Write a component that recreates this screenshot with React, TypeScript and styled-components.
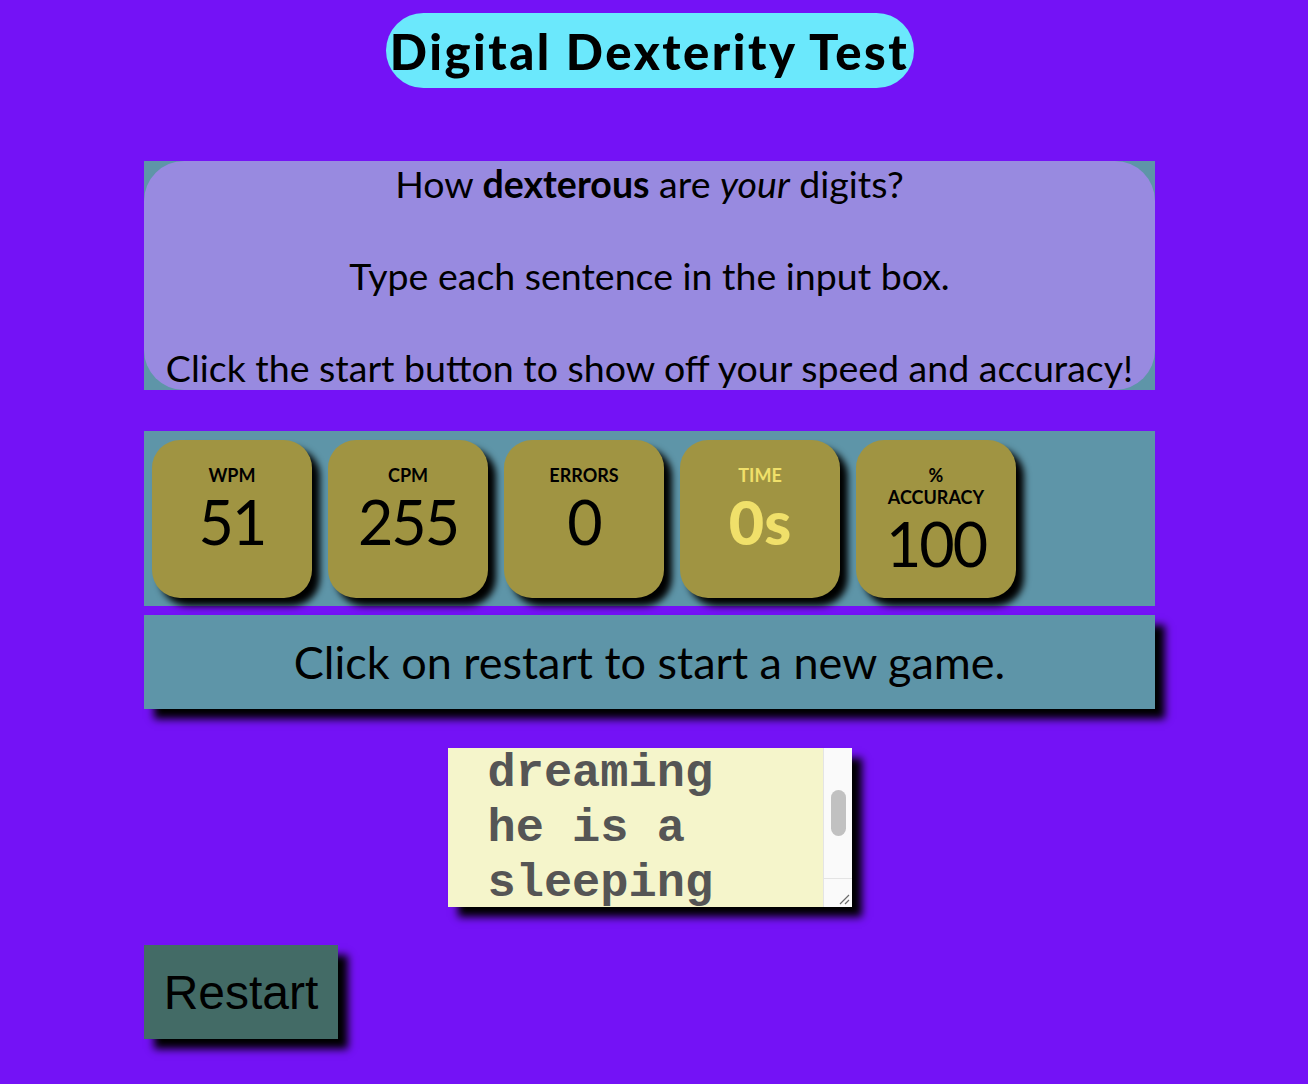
import React from 'react';
import styled, { createGlobalStyle } from 'styled-components';

const GlobalStyle = createGlobalStyle`
  html, body {
    margin: 0;
    padding: 0;
    background: #7412f6;
  }
  body {
    font-family: Lato, "Open Sans", sans-serif;
    color: #000;
  }
`;

const Page = styled.div`
  width: 1299px;
  display: flex;
  flex-direction: column;
  align-items: center;
  padding-top: 13px;
  padding-bottom: 45px;
`;

const TitlePill = styled.h1`
  margin: 0;
  height: 75px;
  width: 528px;
  border-radius: 38px;
  background: #6be8fc;
  display: flex;
  align-items: center;
  justify-content: center;
  font-size: 49px;
  font-weight: 900;
  letter-spacing: 2.5px;
  white-space: nowrap;
`;

const Panel = styled.div`
  width: 1011px;
  background: #5e95a8;
  box-sizing: border-box;
`;

const IntroPanel = styled(Panel)`
  margin-top: 73px;
`;

const IntroInner = styled.div`
  background: #988ae0;
  border-radius: 40px;
  text-align: center;
  font-size: 37.5px;
  line-height: 46px;
  height: 229px;
  white-space: nowrap;
`;

const StatsPanel = styled(Panel)`
  margin-top: 41px;
  height: 175px;
  padding: 9px 8px;
  display: flex;
  gap: 16px;
`;

const StatCard = styled.div`
  width: 160px;
  height: 158px;
  border-radius: 28px;
  background: #a09442;
  box-shadow: 8px 8px 7px #000;
  display: flex;
  flex-direction: column;
  align-items: center;
  padding-top: 24px;
  box-sizing: border-box;
`;

const StatLabel = styled.div<{ $accent?: boolean }>`
  font-size: 18px;
  font-weight: 700;
  line-height: 22px;
  text-align: center;
  color: ${(p) => (p.$accent ? '#f0e06a' : '#000')};
`;

const StatValue = styled.div<{ $accent?: boolean }>`
  margin-top: 6px;
  font-size: 61px;
  line-height: 60px;
  letter-spacing: ${(p) => (p.$accent ? '0' : '-2px')};
  font-weight: ${(p) => (p.$accent ? 900 : 400)};
  color: ${(p) => (p.$accent ? '#f0e06a' : '#000')};
`;

const MessagePanel = styled(Panel)`
  margin-top: 9px;
  height: 94px;
  display: flex;
  align-items: center;
  justify-content: center;
  font-size: 45px;
  box-shadow: 10px 10px 8px #000;
`;

const TypeBoxWrap = styled.div`
  position: relative;
  margin-top: 39px;
  width: 404px;
  height: 159px;
  box-shadow: 10px 10px 8px #000;
`;

const TypeBox = styled.textarea`
  display: block;
  width: 100%;
  height: 100%;
  box-sizing: border-box;
  border: none;
  outline: none;
  resize: both;
  background: #f5f5cb;
  color: #555;
  font-family: "Liberation Mono", "Courier New", monospace;
  font-weight: 700;
  font-size: 47px;
  line-height: 55px;
  padding: 0 0 0 40px;
  overflow-y: scroll;
  white-space: pre;
`;

const ScrollTrack = styled.div`
  position: absolute;
  top: 0;
  right: 0;
  bottom: 0;
  width: 28px;
  background: #fafafa;
  border-left: 1px solid #e4e4e4;
  pointer-events: none;
`;

const ScrollThumb = styled.div`
  position: absolute;
  top: 42px;
  left: 7px;
  width: 15px;
  height: 46px;
  border-radius: 8px;
  background: #c1c1c1;
`;

const ScrollCorner = styled.div`
  position: absolute;
  left: 0;
  right: 0;
  bottom: 0;
  height: 28px;
  border-top: 1px solid #e4e4e4;
`;

const Grip = styled.svg`
  position: absolute;
  right: 2px;
  bottom: 2px;
`;

const ButtonRow = styled.div`
  width: 1011px;
  margin-top: 38px;
`;

const RestartButton = styled.button`
  width: 194px;
  height: 94px;
  border: none;
  background: #436b66;
  font-family: "Liberation Sans", Arial, sans-serif;
  font-size: 48px;
  color: #000;
  box-shadow: 10px 10px 8px #000;
  cursor: pointer;
`;

const stats = [
  { label: 'WPM', value: '51' },
  { label: 'CPM', value: '255' },
  { label: 'ERRORS', value: '0' },
  { label: 'TIME', value: '0s', accent: true },
  { label: '%\nACCURACY', value: '100' },
];

export default function App() {
  return (
    <Page>
      <GlobalStyle />
      <TitlePill>Digital Dexterity Test</TitlePill>
      <IntroPanel>
        <IntroInner>
          How <b>dexterous</b> are <i>your</i> digits?
          <br />
          <br />
          Type each sentence in the input box.
          <br />
          <br />
          Click the start button to show off your speed and accuracy!
        </IntroInner>
      </IntroPanel>
      <StatsPanel>
        {stats.map((s) => (
          <StatCard key={s.label}>
            <StatLabel $accent={s.accent}>
              {s.label.split('\n').map((l) => (
                <div key={l}>{l}</div>
              ))}
            </StatLabel>
            <StatValue $accent={s.accent}>{s.value}</StatValue>
          </StatCard>
        ))}
      </StatsPanel>
      <MessagePanel>Click on restart to start a new game.</MessagePanel>
      <TypeBoxWrap>
        <TypeBox
          readOnly
          defaultValue={'the man is\ndreaming\nhe is a\nsleeping\ngiant'}
          ref={(el) => {
            if (el) el.scrollTop = 57;
          }}
        />
        <ScrollTrack>
          <ScrollThumb />
          <ScrollCorner>
            <Grip width="12" height="12" viewBox="0 0 12 12">
              <path d="M11 2 L2 11 M11 7 L7 11" stroke="#6b6b6b" strokeWidth="1.2" />
            </Grip>
          </ScrollCorner>
        </ScrollTrack>
      </TypeBoxWrap>
      <ButtonRow>
        <RestartButton>Restart</RestartButton>
      </ButtonRow>
    </Page>
  );
}
